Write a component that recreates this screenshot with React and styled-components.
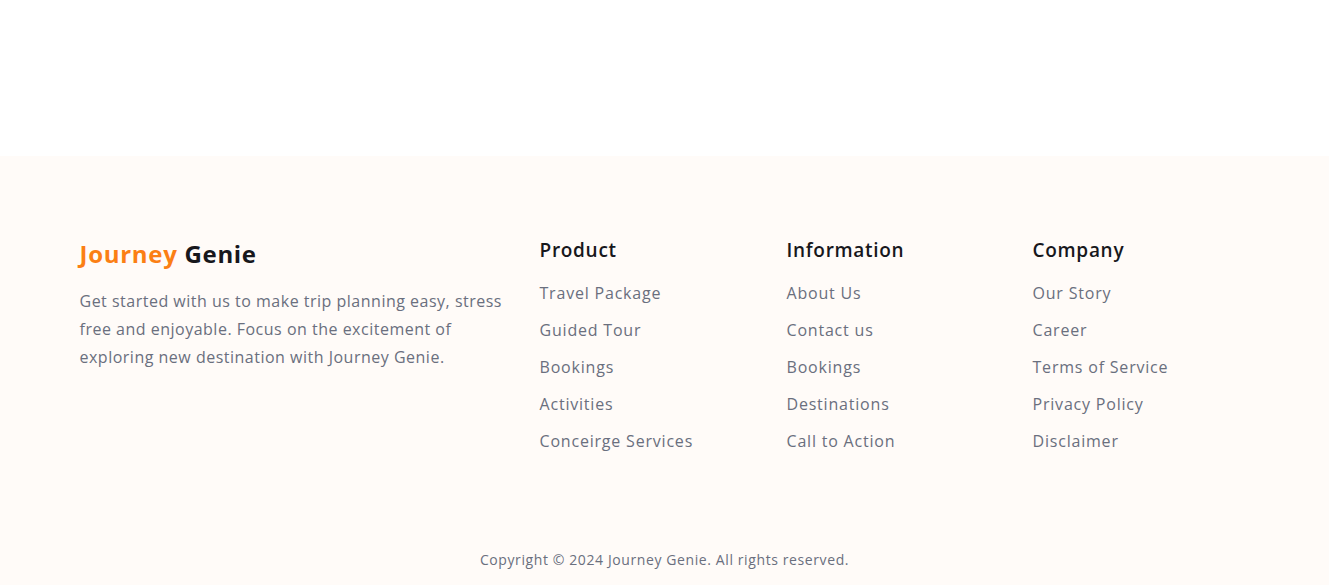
import * as React from "react";
import styled, {createGlobalStyle} from "styled-components";

const GlobalStyle = createGlobalStyle`
  html, body {
    margin: 0;
    padding: 0;
    background: #ffffff;
    font-family: "Open Sans", "Liberation Sans", sans-serif;
  }
`;

const TopSpace = styled.div`
  height: 156px;
  background: #ffffff;
`;

const Footer = styled.footer`
  background: #fffbf8;
  padding: 80px 0 0;
`;

const Container = styled.div`
  width: 1170px;
  margin: 0 auto;
`;

const Grid = styled.div`
  display: grid;
  grid-template-columns: 460px 247px 246px 1fr;
`;

const Brand = styled.div`
  display: flex;
  flex-direction: column;
`;

const Logo = styled.h2`
  margin: 2px 0 0;
  font-size: 24px;
  line-height: 32px;
  font-weight: 700;
  color: #17171c;
  letter-spacing: 0.7px;
`;

const Accent = styled.span`
  color: #fb7f14;
`;

const About = styled.p`
  margin: 17px 0 0;
  max-width: 432px;
  font-size: 16px;
  line-height: 28px;
  color: #6a6f7e;
  letter-spacing: 0.5px;
`;

const Column = styled.div`
  display: flex;
  flex-direction: column;
`;

const Heading = styled.h3`
  margin: 0 0 17px;
  font-size: 19px;
  line-height: 28px;
  font-weight: 600;
  color: #17171c;
  letter-spacing: 0.7px;
`;

const Links = styled.ul`
  list-style: none;
  margin: 0;
  padding: 0;
  display: flex;
  flex-direction: column;
  gap: 13px;
`;

const LinkItem = styled.li`
  font-size: 16px;
  line-height: 24px;
  color: #6a6f7e;
  letter-spacing: 0.8px;
  cursor: pointer;
`;

const Bottom = styled.div`
  padding: 97px 0 16px;
  text-align: center;
  font-size: 14px;
  line-height: 20px;
  color: #6a6f7e;
  letter-spacing: 0.6px;
`;

const columns = [
    {title: "Product", links: ["Travel Package", "Guided Tour", "Bookings", "Activities", "Conceirge Services"]},
    {title: "Information", links: ["About Us", "Contact us", "Bookings", "Destinations", "Call to Action"]},
    {title: "Company", links: ["Our Story", "Career", "Terms of Service", "Privacy Policy", "Disclaimer"]}
];

export default function App() {
    return (
        <>
            <GlobalStyle/>
            <TopSpace/>
            <Footer>
                <Container>
                    <Grid>
                        <Brand>
                            <Logo><Accent>Journey</Accent> Genie</Logo>
                            <About>
                                Get started with us to make trip planning easy, stress free and enjoyable.
                                Focus on the excitement of exploring new destination with Journey Genie.
                            </About>
                        </Brand>
                        {columns.map(col => (
                            <Column key={col.title}>
                                <Heading>{col.title}</Heading>
                                <Links>
                                    {col.links.map(l => <LinkItem key={l}>{l}</LinkItem>)}
                                </Links>
                            </Column>
                        ))}
                    </Grid>
                </Container>
                <Bottom>Copyright © 2024 Journey Genie. All rights reserved.</Bottom>
            </Footer>
        </>
    );
}
